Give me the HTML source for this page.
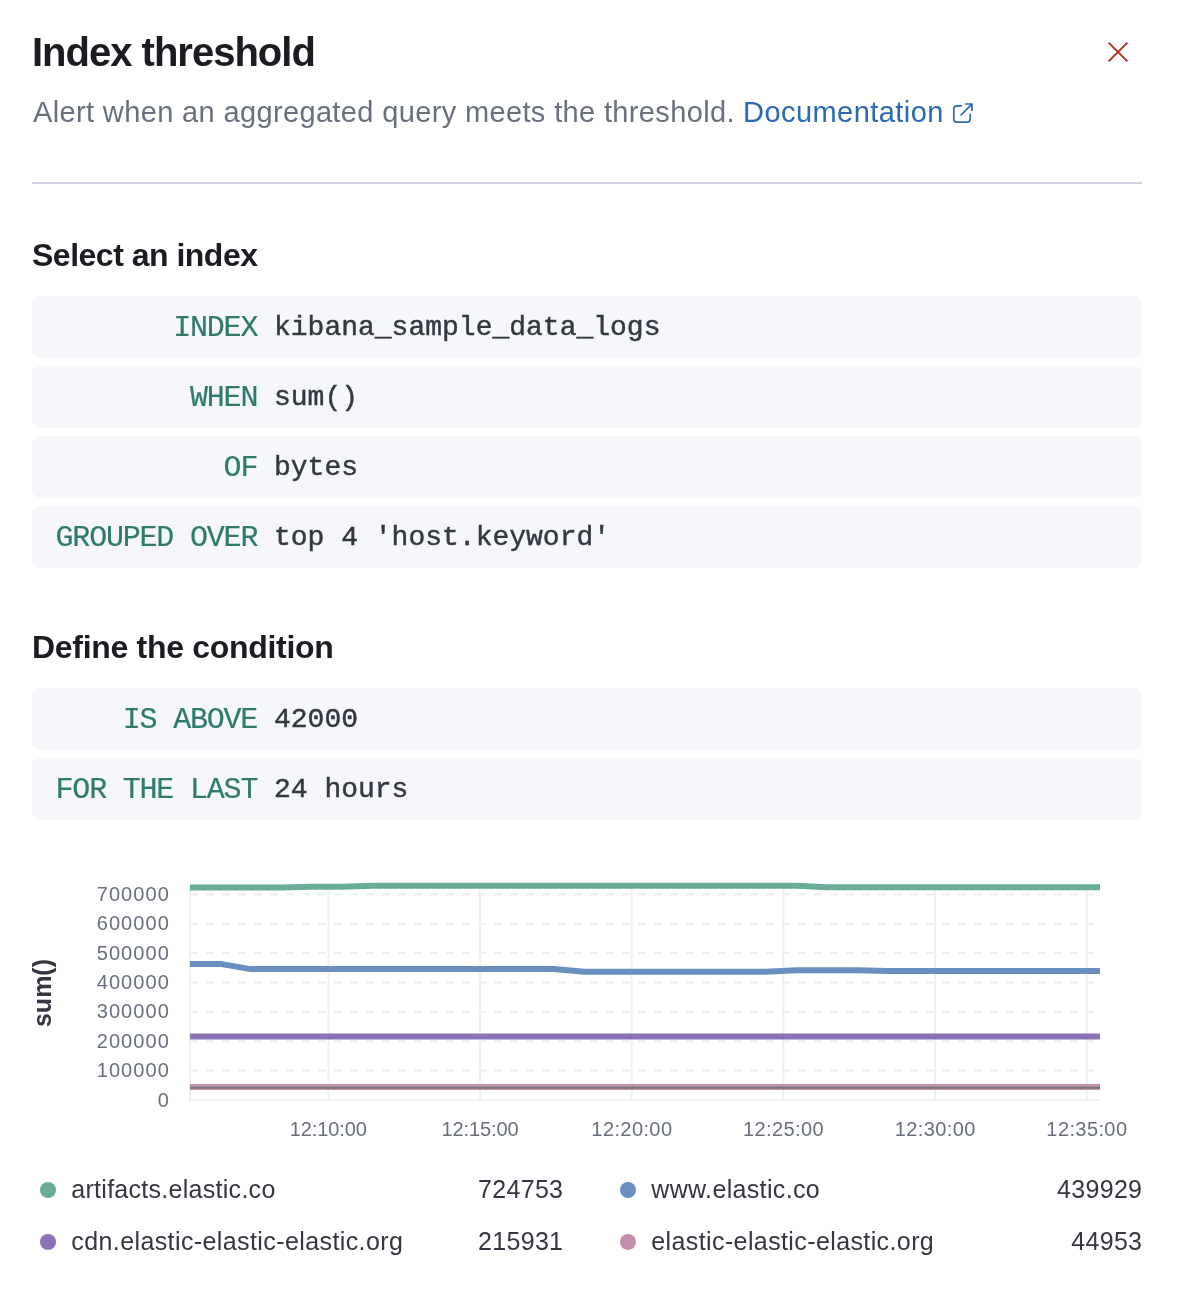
<!DOCTYPE html>
<html lang="en">
<head>
<meta charset="utf-8">
<title>Index threshold</title>
<style>
*{box-sizing:border-box;margin:0;padding:0}
html,body{width:1186px;height:1304px;background:#fff;overflow:hidden}
#root{position:absolute;left:0;top:0;width:1186px;height:1304px;will-change:transform}
body{position:relative;font-family:"Liberation Sans",sans-serif;color:#343741}
.abs{position:absolute;white-space:nowrap;line-height:1}
#title{left:32px;top:32px;font-size:40px;font-weight:700;color:#1a1c21;letter-spacing:-1px}
#sub{left:33px;top:98px;font-size:29px;color:#69707d;letter-spacing:.36px}
#link{left:743px;top:98px;font-size:29px;color:#2a69b3;letter-spacing:.45px}
#hr{left:32px;top:182px;width:1110px;height:2px;background:#d1d6e5}
h2.abs{font-size:32px;font-weight:700;color:#1a1c21}
.row{position:absolute;left:32px;width:1110px;height:62px;background:#f5f7fa;border-radius:8px;font-family:"Liberation Mono",monospace;line-height:1;white-space:nowrap}
.row .k{position:absolute;right:886px;-webkit-text-stroke:.2px #2e7b6d;top:17px;color:#2e7b6d;font-size:30px;letter-spacing:-1.2px;margin-right:-1.2px}
.row .v{position:absolute;left:242px;top:18px;color:#343741;font-size:28px;-webkit-text-stroke:.45px #343741}
.lg{position:absolute;width:530px;height:36px;font-size:25px;letter-spacing:.3px;line-height:36px;color:#343741;white-space:nowrap}
.lg i{position:absolute;left:8px;top:10px;width:16px;height:16px;border-radius:50%}
.lg span{position:absolute;left:39.3px;top:-1px}
.lg b{position:absolute;right:-1.3px;top:-1px;font-weight:400}
</style>
</head>
<body>
<div id="root">
<h1 id="title" class="abs">Index threshold</h1>
<p id="sub" class="abs">Alert when an aggregated query meets the threshold.</p>
<a id="link" class="abs">Documentation</a>
<svg class="abs" style="left:1106px;top:40px" width="24" height="24" viewBox="1106 40 24 24"><path d="M1108.6 42.6 L1127.4 61.4 M1127.4 42.6 L1108.6 61.4" stroke="#b23324" stroke-width="2" fill="none"/></svg>
<svg class="abs" style="left:950px;top:100px" width="26" height="26" viewBox="950 100 26 26" fill="none" stroke="#2a69b3" stroke-width="1.65" stroke-linecap="round" stroke-linejoin="round"><path d="M961.3 105.8 H957 a3.2 3.2 0 0 0 -3.2 3.2 V118.9 a3.2 3.2 0 0 0 3.2 3.2 H967 a3.2 3.2 0 0 0 3.2 -3.2 V114.3"/><path d="M965.6 104 H972 V110.4 M971.6 104.4 L961 115"/></svg>
<div id="hr" class="abs"></div>

<h2 class="abs" style="left:32px;top:239px;letter-spacing:-.5px">Select an index</h2>
<div class="row" style="top:296px"><span class="k">INDEX</span><span class="v">kibana_sample_data_logs</span></div>
<div class="row" style="top:366px"><span class="k">WHEN</span><span class="v">sum()</span></div>
<div class="row" style="top:436px"><span class="k">OF</span><span class="v">bytes</span></div>
<div class="row" style="top:506px"><span class="k">GROUPED OVER</span><span class="v">top 4 'host.keyword'</span></div>

<h2 class="abs" style="left:32px;top:631px;letter-spacing:-.3px">Define the condition</h2>
<div class="row" style="top:688px"><span class="k">IS ABOVE</span><span class="v">42000</span></div>
<div class="row" style="top:758px"><span class="k">FOR THE LAST</span><span class="v">24 hours</span></div>

<svg class="abs" style="left:0;top:860px" width="1186" height="300" viewBox="0 860 1186 300" font-family="Liberation Sans, sans-serif">
<line x1="190" x2="1100" y1="1100.0" y2="1100.0" stroke="#eef0f4" stroke-width="2"/>
<line x1="190" x2="1100" y1="1070.6" y2="1070.6" stroke="#eceef3" stroke-width="2" stroke-dasharray="8 8"/>
<line x1="190" x2="1100" y1="1041.2" y2="1041.2" stroke="#eceef3" stroke-width="2" stroke-dasharray="8 8"/>
<line x1="190" x2="1100" y1="1011.9" y2="1011.9" stroke="#eceef3" stroke-width="2" stroke-dasharray="8 8"/>
<line x1="190" x2="1100" y1="982.5" y2="982.5" stroke="#eceef3" stroke-width="2" stroke-dasharray="8 8"/>
<line x1="190" x2="1100" y1="953.1" y2="953.1" stroke="#eceef3" stroke-width="2" stroke-dasharray="8 8"/>
<line x1="190" x2="1100" y1="923.7" y2="923.7" stroke="#eceef3" stroke-width="2" stroke-dasharray="8 8"/>
<line x1="190" x2="1100" y1="894.3" y2="894.3" stroke="#eceef3" stroke-width="2" stroke-dasharray="8 8"/>
<line x1="328.4" x2="328.4" y1="886" y2="1100" stroke="#eef0f4" stroke-width="2"/>
<line x1="480.1" x2="480.1" y1="886" y2="1100" stroke="#eef0f4" stroke-width="2"/>
<line x1="631.7" x2="631.7" y1="886" y2="1100" stroke="#eef0f4" stroke-width="2"/>
<line x1="783.4" x2="783.4" y1="886" y2="1100" stroke="#eef0f4" stroke-width="2"/>
<line x1="935.1" x2="935.1" y1="886" y2="1100" stroke="#eef0f4" stroke-width="2"/>
<line x1="1086.7" x2="1086.7" y1="886" y2="1100" stroke="#eef0f4" stroke-width="2"/>
<line x1="190" x2="190" y1="886" y2="1101" stroke="#eef0f4" stroke-width="2"/>
<text x="170" y="1106.5" text-anchor="end" font-size="20" fill="#69707d" letter-spacing="1.1">0</text>
<text x="170" y="1077.1" text-anchor="end" font-size="20" fill="#69707d" letter-spacing="1.1">100000</text>
<text x="170" y="1047.7" text-anchor="end" font-size="20" fill="#69707d" letter-spacing="1.1">200000</text>
<text x="170" y="1018.4" text-anchor="end" font-size="20" fill="#69707d" letter-spacing="1.1">300000</text>
<text x="170" y="989.0" text-anchor="end" font-size="20" fill="#69707d" letter-spacing="1.1">400000</text>
<text x="170" y="959.6" text-anchor="end" font-size="20" fill="#69707d" letter-spacing="1.1">500000</text>
<text x="170" y="930.2" text-anchor="end" font-size="20" fill="#69707d" letter-spacing="1.1">600000</text>
<text x="170" y="900.8" text-anchor="end" font-size="20" fill="#69707d" letter-spacing="1.1">700000</text>
<text x="328.3" y="1136.2" text-anchor="middle" font-size="20" fill="#69707d" letter-spacing="-0.1">12:10:00</text>
<text x="480.1" y="1136.2" text-anchor="middle" font-size="20" fill="#69707d" letter-spacing="-0.1">12:15:00</text>
<text x="631.9" y="1136.2" text-anchor="middle" font-size="20" fill="#69707d" letter-spacing="0.4">12:20:00</text>
<text x="783.6" y="1136.2" text-anchor="middle" font-size="20" fill="#69707d" letter-spacing="0.4">12:25:00</text>
<text x="935.3" y="1136.2" text-anchor="middle" font-size="20" fill="#69707d" letter-spacing="0.4">12:30:00</text>
<text x="1086.9" y="1136.2" text-anchor="middle" font-size="20" fill="#69707d" letter-spacing="0.4">12:35:00</text>
<text transform="translate(51.2,993) rotate(-90)" text-anchor="middle" font-size="25" font-weight="700" fill="#343741">sum()</text>
<polyline points="190.0,887.6 220.3,887.6 250.7,887.6 281.0,887.6 311.3,886.7 341.7,886.7 372.0,885.8 402.3,885.8 432.7,885.8 463.0,885.8 493.3,885.8 523.7,885.8 554.0,885.8 584.3,885.8 614.7,885.8 645.0,885.8 675.3,885.8 705.7,885.8 736.0,885.8 766.3,885.8 796.7,885.8 827.0,887.2 857.3,887.2 887.7,887.2 918.0,887.2 948.3,887.2 978.7,887.2 1009.0,887.2 1039.3,887.2 1069.7,887.2 1100.0,887.2" fill="none" stroke="#6aad96" stroke-width="6" stroke-linejoin="round"/>
<polyline points="190.0,963.9 220.3,963.9 250.7,969.1 281.0,969.1 311.3,969.1 341.7,969.1 372.0,969.1 402.3,969.1 432.7,969.1 463.0,969.1 493.3,969.1 523.7,969.1 554.0,969.1 584.3,971.8 614.7,971.8 645.0,971.8 675.3,971.8 705.7,971.8 736.0,971.8 766.3,971.8 796.7,970.3 827.0,970.3 857.3,970.3 887.7,971.1 918.0,971.1 948.3,971.1 978.7,971.1 1009.0,971.1 1039.3,971.1 1069.7,971.1 1100.0,971.1" fill="none" stroke="#6a8fbf" stroke-width="6" stroke-linejoin="round"/>
<polyline points="190.0,1036.6 220.3,1036.6 250.7,1036.6 281.0,1036.6 311.3,1036.6 341.7,1036.6 372.0,1036.6 402.3,1036.6 432.7,1036.6 463.0,1036.6 493.3,1036.6 523.7,1036.6 554.0,1036.6 584.3,1036.6 614.7,1036.6 645.0,1036.6 675.3,1036.6 705.7,1036.6 736.0,1036.6 766.3,1036.6 796.7,1036.6 827.0,1036.6 857.3,1036.6 887.7,1036.6 918.0,1036.6 948.3,1036.6 978.7,1036.6 1009.0,1036.6 1039.3,1036.6 1069.7,1036.6 1100.0,1036.6" fill="none" stroke="#8c72b5" stroke-width="6" stroke-linejoin="round"/>
<polyline points="190.0,1086.9 220.3,1086.9 250.7,1086.9 281.0,1086.9 311.3,1086.9 341.7,1086.9 372.0,1086.9 402.3,1086.9 432.7,1086.9 463.0,1086.9 493.3,1086.9 523.7,1086.9 554.0,1086.9 584.3,1086.9 614.7,1086.9 645.0,1086.9 675.3,1086.9 705.7,1086.9 736.0,1086.9 766.3,1086.9 796.7,1086.9 827.0,1086.9 857.3,1086.9 887.7,1086.9 918.0,1086.9 948.3,1086.9 978.7,1086.9 1009.0,1086.9 1039.3,1086.9 1069.7,1086.9 1100.0,1086.9" fill="none" stroke="#c48fad" stroke-width="6" stroke-linejoin="round"/>
<line x1="190" x2="1100" y1="1087.8" y2="1087.8" stroke="#777777" stroke-width="2"/>
</svg>

<div class="lg" style="left:32px;top:1172px"><i style="background:#6aad96"></i><span style="letter-spacing:.28px">artifacts.elastic.co</span><b>724753</b></div>
<div class="lg" style="left:612px;top:1172px"><i style="background:#6a8fbf"></i><span style="letter-spacing:.34px">www.elastic.co</span><b style="right:-.3px">439929</b></div>
<div class="lg" style="left:32px;top:1224px"><i style="background:#8c72b5"></i><span style="letter-spacing:.4px">cdn.elastic-elastic-elastic.org</span><b>215931</b></div>
<div class="lg" style="left:612px;top:1224px"><i style="background:#c48fad"></i><span style="letter-spacing:.39px">elastic-elastic-elastic.org</span><b style="right:-.3px">44953</b></div>
</div>
</body>
</html>
